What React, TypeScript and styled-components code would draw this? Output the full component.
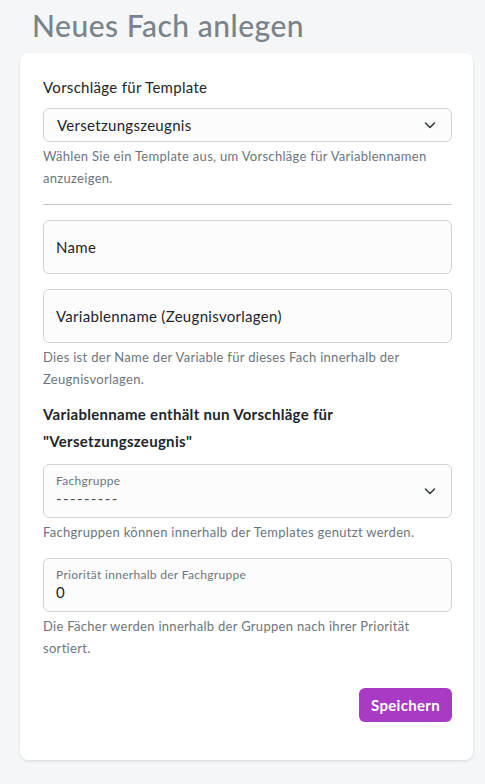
import styled, { createGlobalStyle } from 'styled-components';

const GlobalStyle = createGlobalStyle`
  body {
    margin: 0;
    background: #f5f6f8;
    font-family: Lato, "Noto Sans", sans-serif;
    letter-spacing: 0.3px;
    color: #212529;
  }
`;

function Chevron() {
  return (
    <ChevronIcon viewBox="0 0 16 16" fill="none">
      <path d="M3.5 6l4.5 4.5L12.5 6" stroke="#343a40" strokeWidth="1.6" strokeLinecap="round" strokeLinejoin="round" />
    </ChevronIcon>
  );
}

export default function App() {
  return (
    <>
      <GlobalStyle />
      <Page>
        <Title>Neues Fach anlegen</Title>
        <Card>
          <Label>Vorschläge für Template</Label>
          <SmallSelect>
            <span>Versetzungszeugnis</span>
            <Chevron />
          </SmallSelect>
          <Help>Wählen Sie ein Template aus, um Vorschläge für Variablennamen anzuzeigen.</Help>
          <Divider />
          <Field>
            <Placeholder>Name</Placeholder>
          </Field>
          <Field $gap>
            <Placeholder>Variablenname (Zeugnisvorlagen)</Placeholder>
          </Field>
          <Help>Dies ist der Name der Variable für dieses Fach innerhalb der Zeugnisvorlagen.</Help>
          <Heading>Variablenname enthält nun Vorschläge für "Versetzungszeugnis"</Heading>
          <Field>
            <Stack>
              <FloatLabel>Fachgruppe</FloatLabel>
              <Value $muted>---------</Value>
            </Stack>
            <Chevron />
          </Field>
          <Help>Fachgruppen können innerhalb der Templates genutzt werden.</Help>
          <Field $gap>
            <Stack>
              <FloatLabel>Priorität innerhalb der Fachgruppe</FloatLabel>
              <Value>0</Value>
            </Stack>
          </Field>
          <Help>Die Fächer werden innerhalb der Gruppen nach ihrer Priorität sortiert.</Help>
          <Actions>
            <Button>Speichern</Button>
          </Actions>
        </Card>
      </Page>
    </>
  );
}

const Page = styled.div`
  display: flex;
  flex-direction: column;
  padding: 4px 12px 24px 20px;
`;

const Title = styled.h1`
  margin: 0 0 7px 12px;
  font-size: 30px;
  font-weight: 500;
  line-height: 42px;
  letter-spacing: 0.5px;
  color: #7b838a;
`;

const Card = styled.div`
  display: flex;
  flex-direction: column;
  padding: 23px 21px 38px 23px;
  background: #fff;
  border-radius: 8px;
  box-shadow: 0 1px 3px rgba(0, 0, 0, 0.12);
`;

const Label = styled.div`
  font-size: 15px;
  line-height: 22px;
  margin-bottom: 10px;
`;

const SmallSelect = styled.div`
  display: flex;
  align-items: center;
  justify-content: space-between;
  height: 34px;
  box-sizing: border-box;
  padding: 0 13px 0 13px;
  background: #fcfcfc;
  border: 1px solid #ced4da;
  border-radius: 6px;
  font-size: 15px;
`;

const ChevronIcon = styled.svg`
  width: 16px;
  height: 16px;
`;

const Help = styled.div`
  margin-top: 3px;
  padding-right: 16px;
  font-size: 13px;
  line-height: 22px;
  color: #6c757d;
`;

const Divider = styled.hr`
  margin: 15px 0;
  border: 0;
  border-top: 1px solid #c8ccd0;
`;

const Field = styled.div<{ $gap?: boolean }>`
  display: flex;
  align-items: center;
  justify-content: space-between;
  height: 54px;
  box-sizing: border-box;
  margin-top: ${(p) => (p.$gap ? '15px' : '0')};
  padding: 0 13px 0 12px;
  background: #fcfcfc;
  border: 1px solid #ced4da;
  border-radius: 6px;
`;

const Placeholder = styled.span`
  font-size: 15px;
`;

const Stack = styled.div`
  display: flex;
  flex-direction: column;
  align-self: flex-start;
  padding-top: 7px;
`;

const FloatLabel = styled.span`
  font-size: 12px;
  line-height: 17px;
  color: #6c757d;
`;

const Value = styled.span<{ $muted?: boolean }>`
  font-size: 15px;
  line-height: 18px;
  letter-spacing: ${(p) => (p.$muted ? '1.4px' : '0.3px')};
  color: ${(p) => (p.$muted ? '#495057' : '#212529')};
`;

const Heading = styled.div`
  margin: 11px 0 9px;
  font-size: 15px;
  font-weight: 700;
  line-height: 27px;
  padding-right: 60px;
`;

const Actions = styled.div`
  display: flex;
  justify-content: flex-end;
  margin-top: 29px;
`;

const Button = styled.button`
  height: 34px;
  padding: 0 12px;
  background: #a83ac4;
  color: #fff;
  border: 0;
  border-radius: 6px;
  font-family: inherit;
  font-size: 15px;
  font-weight: 700;
  letter-spacing: 0.3px;
`;
